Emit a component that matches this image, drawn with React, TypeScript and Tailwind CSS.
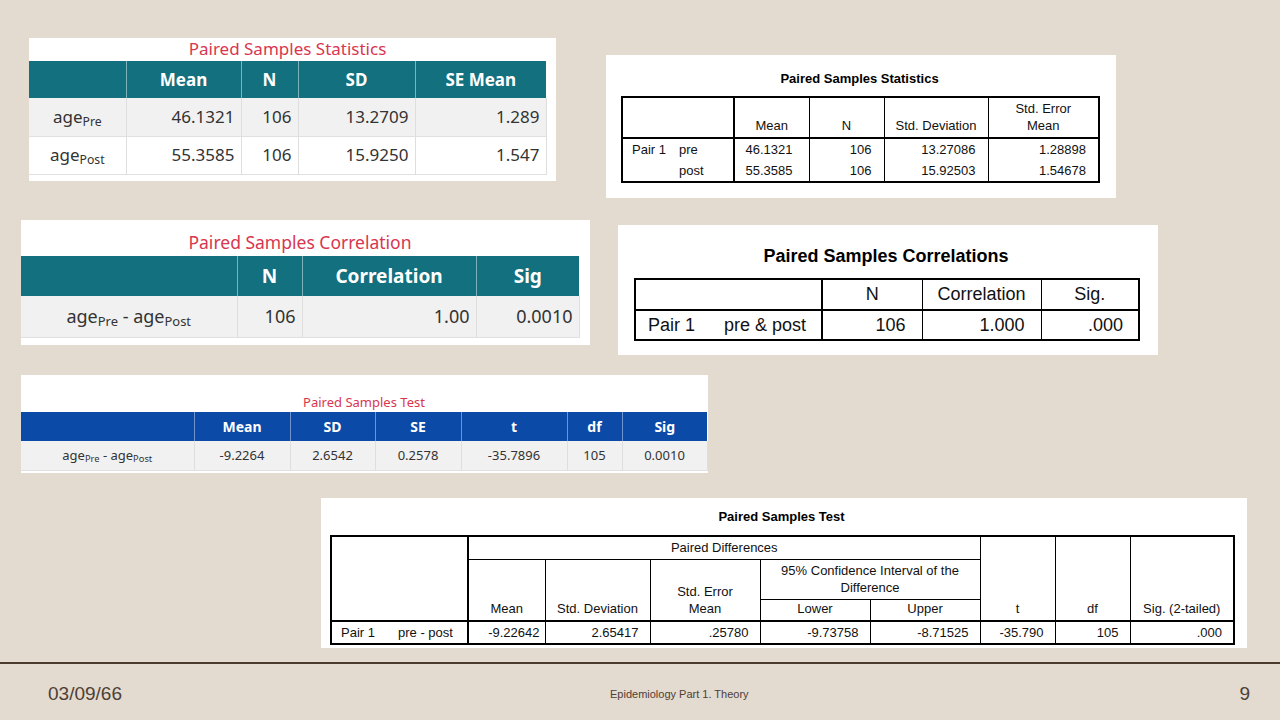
import React from "react";

const modern = "font-['Noto_Sans',sans-serif]";
const spss = "font-['Liberation_Sans',Arial,sans-serif]";

function Age({ sub }: { sub: string }) {
  return (
    <span>
      age<sub className="text-[72%]">{sub}</sub>
    </span>
  );
}

function StatsModern() {
  const rows = [
    ["Pre", "46.1321", "106", "13.2709", "1.289"],
    ["Post", "55.3585", "106", "15.9250", "1.547"],
  ];
  return (
    <div className={`ml-[29px] w-[527px] h-[143px] bg-white ${modern}`}>
      <div className="w-[517px] h-[23px] text-center text-[17px] leading-[21px] text-[#d8364f]">
        Paired Samples Statistics
      </div>
      <table className="w-[517px] table-fixed border-collapse">
        <colgroup>
          <col className="w-[97px]" />
          <col className="w-[115px]" />
          <col className="w-[57px]" />
          <col className="w-[117px]" />
          <col className="w-[131px]" />
        </colgroup>
        <thead>
          <tr className="h-[37px] bg-[#13707e] text-white text-[17px] font-bold">
            <th className="border-r border-[#7db3bb]"></th>
            <th className="border-r border-[#7db3bb]">Mean</th>
            <th className="border-r border-[#7db3bb]">N</th>
            <th className="border-r border-[#7db3bb]">SD</th>
            <th>SE Mean</th>
          </tr>
        </thead>
        <tbody className="text-[17px] text-[#333]">
          {rows.map((r, i) => (
            <tr
              key={i}
              className={`h-[38px] border-b border-[#e0e0e0] ${i === 0 ? "bg-[#f1f1f1]" : "bg-white"}`}
            >
              <td className="text-center border-r border-[#dedede]">
                <Age sub={r[0]} />
              </td>
              <td className="text-right pr-[6px] border-r border-[#dedede]">{r[1]}</td>
              <td className="text-right pr-[6px] border-r border-[#dedede]">{r[2]}</td>
              <td className="text-right pr-[6px] border-r border-[#dedede]">{r[3]}</td>
              <td className="text-right pr-[6px] border-r border-[#dedede]">{r[4]}</td>
            </tr>
          ))}
        </tbody>
      </table>
    </div>
  );
}

function StatsSpss() {
  const th = "border border-black border-b-2 align-bottom font-normal pb-[3px] leading-[17px] text-center";
  return (
    <div className={`ml-[50px] mt-[17px] w-[510px] h-[143px] bg-white text-black ${spss}`}>
      <div className="pt-[16px] ml-[15px] w-[477px] leading-[16px] text-[13px] font-bold text-center">
        Paired Samples Statistics
      </div>
      <table className="ml-[15px] mt-[9px] w-[477px] table-fixed border-collapse border-2 border-black text-[13px] text-[#111]">
        <colgroup>
          <col className="w-[57px]" />
          <col className="w-[55px]" />
          <col className="w-[75px]" />
          <col className="w-[75px]" />
          <col className="w-[104px]" />
          <col className="w-[111px]" />
        </colgroup>
        <thead>
          <tr className="h-[41px]">
            <th colSpan={2} className="border-r-2 border-b-2 border-black"></th>
            <th className={th}>Mean</th>
            <th className={th}>N</th>
            <th className={th}>Std. Deviation</th>
            <th className={th}>
              Std. Error
              <br />
              Mean
            </th>
          </tr>
        </thead>
        <tbody>
          <tr className="h-[22px]">
            <td className="pl-[9px]">Pair 1</td>
            <td className="border-r-2 border-black">pre</td>
            <td className="text-right pr-[16px] border-r border-black">46.1321</td>
            <td className="text-right pr-[12px] border-r border-black">106</td>
            <td className="text-right pr-[12px] border-r border-black">13.27086</td>
            <td className="text-right pr-[12px]">1.28898</td>
          </tr>
          <tr className="h-[22px]">
            <td></td>
            <td className="border-r-2 border-black">post</td>
            <td className="text-right pr-[16px] border-r border-black">55.3585</td>
            <td className="text-right pr-[12px] border-r border-black">106</td>
            <td className="text-right pr-[12px] border-r border-black">15.92503</td>
            <td className="text-right pr-[12px]">1.54678</td>
          </tr>
        </tbody>
      </table>
    </div>
  );
}

function CorrModern() {
  return (
    <div className={`ml-[21px] w-[569px] h-[125px] bg-white ${modern}`}>
      <div className="w-[558px] h-[36px] pt-[10px] text-center text-[17.5px] leading-[24px] text-[#d8364f]">
        Paired Samples Correlation
      </div>
      <table className="w-[558px] table-fixed border-collapse">
        <colgroup>
          <col className="w-[216px]" />
          <col className="w-[65px]" />
          <col className="w-[174px]" />
          <col className="w-[103px]" />
        </colgroup>
        <thead>
          <tr className="h-[40px] bg-[#13707e] text-white text-[19px] font-bold">
            <th className="border-r border-[#7db3bb]"></th>
            <th className="border-r border-[#7db3bb]">N</th>
            <th className="border-r border-[#7db3bb]">Correlation</th>
            <th>Sig</th>
          </tr>
        </thead>
        <tbody className="text-[18px] text-[#333]">
          <tr className="h-[41px] bg-[#f1f1f1] border-b border-[#e0e0e0]">
            <td className="text-center border-r border-[#dedede]">
              <Age sub="Pre" /> - <Age sub="Post" />
            </td>
            <td className="text-right pr-[6px] border-r border-[#dedede]">106</td>
            <td className="text-right pr-[6px] border-r border-[#dedede]">1.00</td>
            <td className="text-right pr-[6px] border-r border-[#dedede]">0.0010</td>
          </tr>
        </tbody>
      </table>
    </div>
  );
}

function CorrSpss() {
  const th = "border border-black border-b-2 font-normal text-center";
  return (
    <div className={`ml-[28px] mt-[5px] w-[540px] h-[130px] bg-white text-black ${spss}`}>
      <div className="pt-[20px] ml-[16px] w-[504px] leading-[22px] text-[18px] font-bold text-center">
        Paired Samples Correlations
      </div>
      <table className="ml-[16px] mt-[11px] w-[504px] table-fixed border-collapse border-2 border-black text-[18px] text-[#111]">
        <colgroup>
          <col className="w-[187px]" />
          <col className="w-[100px]" />
          <col className="w-[119px]" />
          <col className="w-[98px]" />
        </colgroup>
        <thead>
          <tr className="h-[31px]">
            <th className="border-r-2 border-b-2 border-black"></th>
            <th className={th}>N</th>
            <th className={th}>Correlation</th>
            <th className={th}>Sig.</th>
          </tr>
        </thead>
        <tbody>
          <tr className="h-[30px]">
            <td className="border-r-2 border-black">
              <div className="flex">
                <span className="pl-[12px] w-[88px]">Pair 1</span>
                <span>pre &amp; post</span>
              </div>
            </td>
            <td className="text-right pr-[16px] border-r border-black">106</td>
            <td className="text-right pr-[16px] border-r border-black">1.000</td>
            <td className="text-right pr-[15px]">.000</td>
          </tr>
        </tbody>
      </table>
    </div>
  );
}

function TestModern() {
  const heads = ["Mean", "SD", "SE", "t", "df", "Sig"];
  const vals = ["-9.2264", "2.6542", "0.2578", "-35.7896", "105", "0.0010"];
  return (
    <div className={`ml-[21px] w-[687px] h-[98px] bg-white ${modern}`}>
      <div className="w-[686px] h-[37px] pt-[18px] text-center text-[13px] leading-[18px] text-[#d8364f]">
        Paired Samples Test
      </div>
      <table className="w-[686px] table-fixed border-collapse">
        <colgroup>
          <col className="w-[173px]" />
          <col className="w-[96px]" />
          <col className="w-[85px]" />
          <col className="w-[86px]" />
          <col className="w-[106px]" />
          <col className="w-[55px]" />
          <col className="w-[85px]" />
        </colgroup>
        <thead>
          <tr className="h-[29px] bg-[#0c4aa8] text-white text-[14px] font-bold">
            <th className="border-r border-[#6f93cf]"></th>
            {heads.map((h, i) => (
              <th key={h} className={i < heads.length - 1 ? "border-r border-[#6f93cf]" : ""}>
                {h}
              </th>
            ))}
          </tr>
        </thead>
        <tbody className="text-[13px] text-[#333]">
          <tr className="h-[29px] bg-[#f1f1f1] border-b border-[#e0e0e0]">
            <td className="text-center border-r border-[#dedede]">
              <Age sub="Pre" /> - <Age sub="Post" />
            </td>
            {vals.map((v, i) => (
              <td key={i} className="text-center border-r border-[#dedede]">
                {v}
              </td>
            ))}
          </tr>
        </tbody>
      </table>
    </div>
  );
}

function TestSpss() {
  const thb = "border border-black border-b-2 align-bottom font-normal pb-[3px] leading-[17px] text-center";
  const td = "text-right pr-[11px] border-r border-black";
  return (
    <div className={`ml-[321px] w-[926px] h-[150px] bg-white text-black ${spss}`}>
      <div className="pt-[11px] ml-[9px] w-[903px] leading-[16px] text-[13px] font-bold text-center">
        Paired Samples Test
      </div>
      <table className="ml-[9px] mt-[10px] w-[903px] table-fixed border-collapse border-2 border-black text-[13px] text-[#111]">
        <colgroup>
          <col className="w-[137px]" />
          <col className="w-[77px]" />
          <col className="w-[105px]" />
          <col className="w-[110px]" />
          <col className="w-[110px]" />
          <col className="w-[110px]" />
          <col className="w-[75px]" />
          <col className="w-[75px]" />
          <col className="w-[104px]" />
        </colgroup>
        <thead>
          <tr className="h-[23px]">
            <th rowSpan={3} className="border-r-2 border-b-2 border-black"></th>
            <th colSpan={5} className="border border-black font-normal text-center leading-[17px]">
              Paired Differences
            </th>
            <th rowSpan={3} className={thb}>t</th>
            <th rowSpan={3} className={thb}>df</th>
            <th rowSpan={3} className={thb}>Sig. (2-tailed)</th>
          </tr>
          <tr className="h-[40px]">
            <th rowSpan={2} className={thb}>Mean</th>
            <th rowSpan={2} className={thb}>Std. Deviation</th>
            <th rowSpan={2} className={thb}>
              Std. Error
              <br />
              Mean
            </th>
            <th colSpan={2} className="border border-black align-bottom font-normal pb-[3px] leading-[17px] text-center">
              95% Confidence Interval of the
              <br />
              Difference
            </th>
          </tr>
          <tr className="h-[22px]">
            <th className={thb}>Lower</th>
            <th className={thb}>Upper</th>
          </tr>
        </thead>
        <tbody>
          <tr className="h-[23px]">
            <td className="border-r-2 border-black">
              <div className="flex">
                <span className="pl-[9px] w-[66px]">Pair 1</span>
                <span>pre - post</span>
              </div>
            </td>
            <td className="text-right pr-[5px] border-r border-black">-9.22642</td>
            <td className={td}>2.65417</td>
            <td className={td}>.25780</td>
            <td className={td}>-9.73758</td>
            <td className={td}>-8.71525</td>
            <td className={td}>-35.790</td>
            <td className={td}>105</td>
            <td className="text-right pr-[11px]">.000</td>
          </tr>
        </tbody>
      </table>
    </div>
  );
}

export default function App() {
  return (
    <div className="w-[1280px] h-[720px] bg-[#e3dad0] flex flex-col overflow-hidden">
      <div className="flex items-start mt-[38px]">
        <StatsModern />
        <StatsSpss />
      </div>
      <div className="flex items-start mt-[22px]">
        <CorrModern />
        <CorrSpss />
      </div>
      <div className="flex items-start mt-[20px]">
        <TestModern />
      </div>
      <div className="flex items-start mt-[25px]">
        <TestSpss />
      </div>
      <div className="mt-[14px] h-[2px] w-full bg-[#4b3b2f]" />
      <div className={`h-[56px] pt-[4px] flex items-center text-[#4e4035] ${spss}`}>
        <div className="w-[610px] pl-[48px] text-[19px]">03/09/66</div>
        <div className="text-[11px]">Epidemiology Part 1. Theory</div>
        <div className="ml-auto pr-[30px] text-[19px]">9</div>
      </div>
    </div>
  );
}
